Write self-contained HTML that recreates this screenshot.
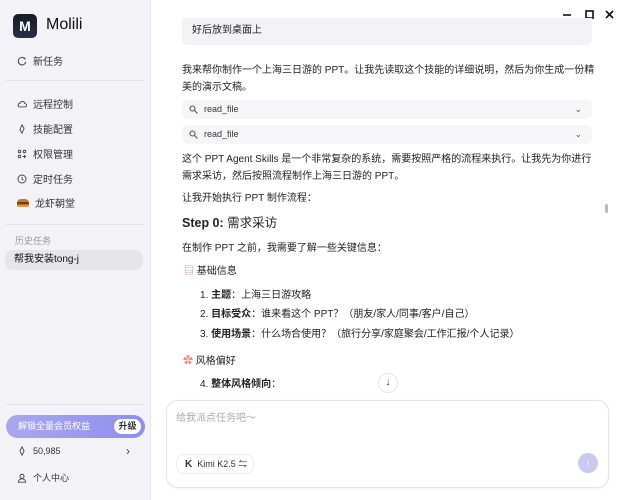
<!DOCTYPE html>
<html><head><meta charset="utf-8"><style>
*{margin:0;padding:0;box-sizing:border-box}
body{width:625px;height:500px;overflow:hidden;background:#fff;font-family:"Liberation Sans","Noto Sans CJK SC",sans-serif;color:#222;position:relative;font-size:11px}
.a{position:absolute;white-space:nowrap}
.side{position:absolute;left:0;top:0;width:151px;height:500px;background:#f3f3f7;border-right:1px solid #e6e6ec}
.nav{position:absolute;left:17px;font-size:10px;color:#333;display:flex;align-items:center;gap:6px}
.nav svg{width:10px;height:10px}
.p{position:absolute;left:182px;font-size:10px;line-height:17px;color:#222;white-space:nowrap}
.rf{position:absolute;left:182px;width:410px;height:19px;background:#f6f6f8;border-radius:5px;font-size:9px;color:#333;padding-left:22px;line-height:19px}
</style></head><body>
<div class="side">
 <div class="a" style="left:13px;top:14px;width:24px;height:24px;border-radius:5px;background:linear-gradient(#1a1a22,#24304a);color:#fff;font-weight:bold;font-size:14px;text-align:center;line-height:24px">M</div>
 <div class="a" style="left:46px;top:16px;font-size:16px;color:#111">Molili</div>
 <div class="nav" style="top:53px"><svg viewBox="0 0 12 12" fill="none" stroke="#444" stroke-width="1.2"><path d="M10 4A4.5 4.5 0 1 0 10.5 7"/><path d="M8 1.5 10 4"/></svg>新任务</div>
 <div class="a" style="left:5px;top:80px;width:140px;height:1px;background:#e4e4ea"></div>
 <div class="nav" style="top:96px"><svg viewBox="0 0 12 12" fill="none" stroke="#444" stroke-width="1.1"><path d="M3 9.5h6.5a2 2 0 0 0 0-4 3 3 0 0 0-5.8-.5A2.3 2.3 0 0 0 3 9.5z"/></svg>远程控制</div>
 <div class="nav" style="top:121px"><svg viewBox="0 0 12 12" fill="none" stroke="#444" stroke-width="1.1"><path d="M6 1l2.5 4L6 11 3.5 7z"/></svg>技能配置</div>
 <div class="nav" style="top:146px"><svg viewBox="0 0 12 12" fill="none" stroke="#444" stroke-width="1.1"><circle cx="3" cy="3" r="1.5"/><circle cx="9" cy="3" r="1.5"/><circle cx="3" cy="9" r="1.5"/><path d="M9 7v4M7 9h4"/></svg>权限管理</div>
 <div class="nav" style="top:171px"><svg viewBox="0 0 12 12" fill="none" stroke="#444" stroke-width="1.1"><circle cx="6" cy="6" r="4.8"/><path d="M6 3.5V6l1.8 1.5"/></svg>定时任务</div>
 <div class="nav" style="top:195px"><span style="display:inline-block;width:12px;height:8px;border-radius:4px 4px 1px 1px;background:linear-gradient(#c77a2a 0 40%,#7a3b1a 40% 70%,#d8a040 70%)"></span>龙虾朝堂</div>
 <div class="a" style="left:5px;top:224px;width:140px;height:1px;background:#e4e4ea"></div>
 <div class="a" style="left:15px;top:234px;font-size:9px;color:#999">历史任务</div>
 <div class="a" style="left:5px;top:250px;width:138px;height:20px;border-radius:8px;background:#e6e6ea;font-size:10px;color:#111;padding-left:9px;line-height:20px">帮我安装tong-j</div>
 <div class="a" style="left:5px;top:404px;width:140px;height:1px;background:#e4e4ea"></div>
 <div class="a" style="left:6px;top:415px;width:139px;height:23px;border-radius:12px;background:linear-gradient(90deg,#a9a8ee,#8e8ef0);color:#fff;font-size:9px;line-height:23px;padding-left:12px">解锁全量会员权益<span style="position:absolute;right:4px;top:4px;height:15px;width:27px;border-radius:8px;background:#fff;color:#333;font-size:9px;line-height:15px;text-align:center;font-weight:bold">升级</span></div>
 <div class="nav" style="top:446px;font-size:9px"><svg viewBox="0 0 12 12" fill="none" stroke="#444" stroke-width="1.1"><path d="M6 1l2.5 5L6 11 3.5 6z"/></svg>50,985</div>
 <div class="a" style="left:126px;top:444px;font-size:12px;color:#444">›</div>
 <div class="nav" style="top:471px;font-size:9px"><svg viewBox="0 0 12 12" fill="none" stroke="#444" stroke-width="1.1"><circle cx="6" cy="4" r="2.5"/><path d="M1.5 11a4.5 4 0 0 1 9 0z"/></svg>个人中心</div>
</div>
<svg class="a" style="left:560px;top:8px" width="60" height="14" fill="none" stroke="#111" stroke-width="1.6"><path d="M3 7h8"/><rect x="26" y="3" width="7" height="7"/><path d="M46 3l7 7M53 3l-7 7"/></svg>
<div class="a" style="left:182px;top:18px;width:410px;height:27px;background:#f3f3f7;border-radius:0 0 6px 6px"></div>
<div class="p" style="top:22px;left:192px;font-size:10px">好后放到桌面上</div>
<div class="p" style="top:62px">我来帮你制作一个上海三日游的 PPT。让我先读取这个技能的详细说明，然后为你生成一份精<br>美的演示文稿。</div>
<div class="rf" style="top:100px">read_file<span style="position:absolute;right:10px;color:#555">⌄</span></div>
<div class="rf" style="top:125px">read_file<span style="position:absolute;right:10px;color:#555">⌄</span></div>
<svg class="a" style="left:189px;top:105px" width="9" height="9" fill="none" stroke="#555" stroke-width="1.1"><circle cx="3.5" cy="3.5" r="2.5"/><path d="M5.5 5.5 8.5 8.5"/></svg>
<svg class="a" style="left:189px;top:130px" width="9" height="9" fill="none" stroke="#555" stroke-width="1.1"><circle cx="3.5" cy="3.5" r="2.5"/><path d="M5.5 5.5 8.5 8.5"/></svg>
<div class="p" style="top:151px">这个 PPT Agent Skills 是一个非常复杂的系统，需要按照严格的流程来执行。让我先为你进行<br>需求采访，然后按照流程制作上海三日游的 PPT。</div>
<div class="p" style="top:190px">让我开始执行 PPT 制作流程：</div>
<div class="p" style="top:215px;font-size:12.5px"><b>Step 0:</b> 需求采访</div>
<div class="p" style="top:240px">在制作 PPT 之前，我需要了解一些关键信息：</div>
<div class="p" style="top:263px;left:184px"><span style="color:#d88">▤</span> 基础信息</div>
<div class="p" style="top:287px;left:200px">1. <b>主题</b>：上海三日游攻略</div>
<div class="p" style="top:306px;left:200px">2. <b>目标受众</b>：谁来看这个 PPT？（朋友/家人/同事/客户/自己）</div>
<div class="p" style="top:326px;left:200px">3. <b>使用场景</b>：什么场合使用？（旅行分享/家庭聚会/工作汇报/个人记录）</div>
<div class="p" style="top:353px;left:183px"><span style="color:#e88">✿</span> 风格偏好</div>
<div class="p" style="top:376px;left:200px">4. <b>整体风格倾向</b>：</div>
<div class="a" style="left:378px;top:373px;width:20px;height:20px;border-radius:50%;background:#fff;border:1px solid #e4e4e8;text-align:center;line-height:18px;font-size:10px">↓</div>
<div class="a" style="left:605px;top:204px;width:3px;height:9px;background:#bbb;border-radius:2px"></div>
<div class="a" style="left:166px;top:400px;width:443px;height:88px;border:1px solid #e4e4ea;border-radius:12px;background:#fff;box-shadow:0 1px 3px rgba(0,0,0,.05)"></div>
<div class="a" style="left:176px;top:409px;font-size:10px;color:#aaa">给我派点任务吧～</div>
<div class="a" style="left:176px;top:454px;width:78px;height:20px;border:1px solid #ececf0;border-radius:8px;font-size:9px;line-height:18px;padding-left:8px;color:#333"><b style="font-size:10px">K</b>&nbsp; Kimi K2.5 ⇋</div>
<div class="a" style="left:578px;top:453px;width:20px;height:20px;border-radius:50%;background:#c9c9f2;color:#fff;text-align:center;line-height:20px;font-size:9px">↑</div>
</body></html>
